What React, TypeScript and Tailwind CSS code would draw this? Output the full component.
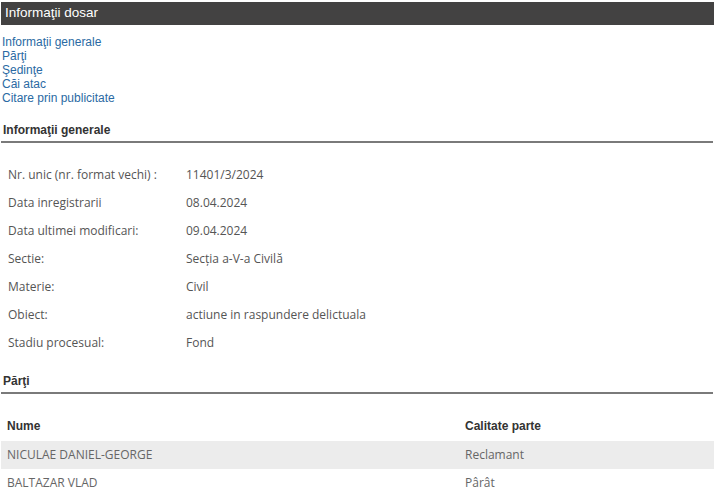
import React from "react"

type Row = { label: string; value: string }

const rows: Row[] = [
    { label: "Nr. unic (nr. format vechi) :", value: "11401/3/2024" },
    { label: "Data inregistrarii", value: "08.04.2024" },
    { label: "Data ultimei modificari:", value: "09.04.2024" },
    { label: "Sectie:", value: "Secția a-V-a Civilă" },
    { label: "Materie:", value: "Civil" },
    { label: "Obiect:", value: "actiune in raspundere delictuala" },
    { label: "Stadiu procesual:", value: "Fond" },
]

const parti = [
    { nume: "NICULAE DANIEL-GEORGE", calitate: "Reclamant" },
    { nume: "BALTAZAR VLAD", calitate: "Pârât" },
]

const links = ["Informaţii generale", "Părţi", "Şedinţe", "Căi atac", "Citare prin publicitate"]

const SectionTitle = ({ children }: { children: React.ReactNode }) => (
    <div className="mr-[2px] border-b-2 border-[#7a7a7a] pb-[3px] pl-[2px] font-['Liberation_Sans',Arial,sans-serif] text-[12px] font-bold text-[#333] leading-[16px]">
        {children}
    </div>
)

export default function App() {
    return (
        <div className="h-[499px] w-[715px] overflow-hidden bg-white pt-[2px] pl-[1px]">
            <div className="mr-[1px] flex h-[23px] items-center bg-[#434242] pl-[4px] font-['Liberation_Sans',Arial,sans-serif] text-[13.5px] text-white">
                Informaţii dosar
            </div>

            <div className="mt-[10px] flex flex-col pl-[1px] font-['Liberation_Sans',Arial,sans-serif] text-[12px] leading-[14px] text-[#2a6aa3]">
                {links.map(l => (
                    <a key={l} href="#" className="w-fit">{l}</a>
                ))}
            </div>

            <div className="mt-[17px]">
                <SectionTitle>Informaţii generale</SectionTitle>
            </div>

            <div className="mt-[18px] flex flex-col font-['Open_Sans',sans-serif] text-[12px] text-[#555]">
                {rows.map(r => (
                    <div key={r.label} className="flex h-[28px] items-center pl-[7px]">
                        <span className="w-[178px]">{r.label}</span>
                        <span>{r.value}</span>
                    </div>
                ))}
            </div>

            <div className="mt-[16px]">
                <SectionTitle>Părţi</SectionTitle>
            </div>

            <table className="mt-[17px] w-[713px] border-collapse text-left">
                <thead>
                    <tr className="h-[30px] font-['Liberation_Sans',Arial,sans-serif] text-[12px] text-[#333]">
                        <th className="pl-[6px] font-semibold">Nume</th>
                        <th className="w-[250px] pl-[1px] font-semibold">Calitate parte</th>
                    </tr>
                </thead>
                <tbody className="font-['Open_Sans',sans-serif] text-[12px] text-[#666]">
                    {parti.map((p, i) => (
                        <tr key={p.nume} className={`h-[28px] ${i % 2 === 0 ? "bg-[#ececec]" : "bg-white"}`}>
                            <td className="pl-[6px]">{p.nume}</td>
                            <td className="pl-[1px]">{p.calitate}</td>
                        </tr>
                    ))}
                </tbody>
            </table>
        </div>
    )
}
